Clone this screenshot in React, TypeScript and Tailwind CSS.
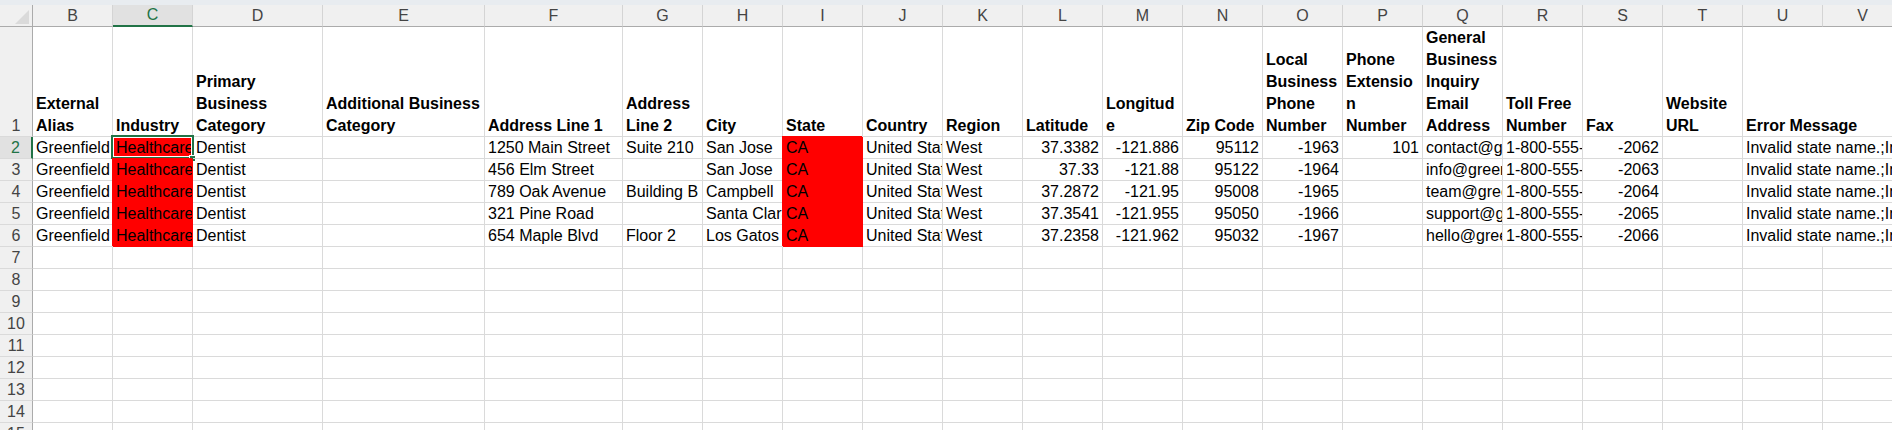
import type { ReactNode } from "react";

const GREEN = "#217346";

const letters = ["B", "C", "D", "E", "F", "G", "H", "I", "J", "K", "L", "M", "N", "O", "P", "Q", "R", "S", "T", "U", "V"];

// header text in row 1, one entry per wrapped line
const heads: string[][] = [
  ["External", "Alias"],
  ["Industry"],
  ["Primary", "Business", "Category"],
  ["Additional Business", "Category"],
  ["Address Line 1"],
  ["Address", "Line 2"],
  ["City"],
  ["State"],
  ["Country"],
  ["Region"],
  ["Latitude"],
  ["Longitud", "e"],
  ["Zip Code"],
  ["Local", "Business", "Phone", "Number"],
  ["Phone", "Extensio", "n", "Number"],
  ["General", "Business", "Inquiry", "Email", "Address"],
  ["Toll Free", "Number"],
  ["Fax"],
  ["Website", "URL"],
  ["Error Message"],
];

const rows: string[][] = [
  ["Greenfield", "Healthcare", "Dentist", "", "1250 Main Street", "Suite 210", "San Jose", "CA", "United States", "West", "37.3382", "-121.886", "95112", "-1963", "101", "contact@greenfielddental.com", "1-800-555-0142", "-2062", "", "Invalid state name.;Invalid fax number."],
  ["Greenfield", "Healthcare", "Dentist", "", "456 Elm Street", "", "San Jose", "CA", "United States", "West", "37.33", "-121.88", "95122", "-1964", "", "info@greenfielddental.com", "1-800-555-0143", "-2063", "", "Invalid state name.;Invalid fax number."],
  ["Greenfield", "Healthcare", "Dentist", "", "789 Oak Avenue", "Building B", "Campbell", "CA", "United States", "West", "37.2872", "-121.95", "95008", "-1965", "", "team@greenfielddental.com", "1-800-555-0144", "-2064", "", "Invalid state name.;Invalid fax number."],
  ["Greenfield", "Healthcare", "Dentist", "", "321 Pine Road", "", "Santa Clara", "CA", "United States", "West", "37.3541", "-121.955", "95050", "-1966", "", "support@greenfielddental.com", "1-800-555-0145", "-2065", "", "Invalid state name.;Invalid fax number."],
  ["Greenfield", "Healthcare", "Dentist", "", "654 Maple Blvd", "Floor 2", "Los Gatos", "CA", "United States", "West", "37.2358", "-121.962", "95032", "-1967", "", "hello@greenfielddental.com", "1-800-555-0146", "-2066", "", "Invalid state name.;Invalid fax number."],
];

const numeric = new Set([10, 11, 12, 13, 14, 17]);
const filled = new Set([1, 7]);

function ColHead({ letter }: { letter: string }) {
  const selected = letter === "C";
  return (
    <div
      className={
        "border-r border-r-[#d4d4d4] text-center " +
        (selected
          ? "border-b-2 border-b-[#217346] bg-[#e1e1e1] text-[#217346] leading-[20px]"
          : "border-b border-b-[#ababab] bg-[#f0f0f0] text-[#444] leading-[21px]")
      }
    >
      {letter}
    </div>
  );
}

function RowHead({ n }: { n: number }) {
  if (n === 1) {
    return (
      <div className="flex flex-col justify-end overflow-hidden border-b border-r border-b-[#dadada] border-r-[#ababab] bg-[#f0f0f0] text-center text-[#444]">
        <div className="-mb-px leading-[22px]">1</div>
      </div>
    );
  }
  const selected = n === 2;
  return (
    <div
      className={
        "border-b border-b-[#dadada] text-center leading-[21px] " +
        (selected
          ? "border-r-2 border-r-[#217346] bg-[#e1e1e1] text-[#217346]"
          : "border-r border-r-[#ababab] bg-[#f0f0f0] text-[#444]")
      }
    >
      {n}
    </div>
  );
}

function Cell({
  children,
  right,
  red,
  span,
  active,
}: {
  children?: ReactNode;
  right?: boolean;
  red?: boolean;
  span?: boolean;
  active?: boolean;
}) {
  return (
    <div
      className={
        "relative border-b border-r leading-[21px] " +
        (red ? "border-[#ff0000] bg-[#ff0000] shadow-[-1px_-1px_0_#ff0000] " : "border-[#dadada] ") +
        (span ? "col-span-2 " : "")
      }
    >
      <div className={"overflow-hidden whitespace-nowrap px-[3px] " + (right ? "text-right" : "")}>{children}</div>
      {active && (
        <>
          <div className="absolute -left-[2px] -top-[2px] -right-[2px] -bottom-[1px] border-2 border-[#217346] shadow-[inset_0_0_0_1px_#ffffff]" />
          <div className="absolute -bottom-[4px] -right-[4px] h-[7px] w-[7px] border border-white bg-[#217346]" />
        </>
      )}
    </div>
  );
}

function HeadCell({ lines, span }: { lines: string[]; span?: boolean }) {
  return (
    <div className={"flex flex-col justify-end overflow-hidden border-b border-r border-[#dadada] px-[3px] font-bold " + (span ? "col-span-2" : "")}>
      <div className="-mb-px">
        {lines.map((l, i) => (
          <div key={i} className="whitespace-nowrap leading-[22px]">
            {l}
          </div>
        ))}
      </div>
    </div>
  );
}

export default function App() {
  const emptyRows = [7, 8, 9, 10, 11, 12, 13, 14, 15];
  return (
    <div className="h-[430px] w-[1892px] overflow-hidden bg-white font-['Liberation_Sans',Arial,sans-serif] text-[16px] text-black">
      <div className="h-[5px] bg-[#e8ecf0]" />
      <div className="grid grid-cols-[33px_80px_80px_130px_162px_138px_repeat(16,80px)] grid-rows-[22px_110px_repeat(14,22px)]">
        {/* column letters */}
        <div className="flex items-end justify-end border-b border-r border-b-[#ababab] border-r-[#ababab] bg-[#f0f0f0] pb-[2px] pr-[3px]">
          <svg width="14" height="14" viewBox="0 0 14 14">
            <path d="M14 0 L14 14 L0 14 Z" fill="#dadada" />
          </svg>
        </div>
        {letters.map((l) => (
          <ColHead key={l} letter={l} />
        ))}

        {/* row 1: field names */}
        <RowHead n={1} />
        {heads.map((h, i) => (
          <HeadCell key={i} lines={h} span={i === 19} />
        ))}

        {/* rows 2-6: records */}
        {rows.map((r, ri) => (
          <div key={ri} className="contents">
            <RowHead n={ri + 2} />
            {r.map((v, ci) => (
              <Cell
                key={ci}
                right={numeric.has(ci)}
                red={filled.has(ci)}
                span={ci === 19}
                active={ri === 0 && ci === 1}
              >
                {v}
              </Cell>
            ))}
          </div>
        ))}

        {/* empty rows */}
        {emptyRows.map((n) => (
          <div key={n} className="contents">
            <RowHead n={n} />
            {letters.map((l) => (
              <Cell key={l} />
            ))}
          </div>
        ))}
      </div>
    </div>
  );
}
